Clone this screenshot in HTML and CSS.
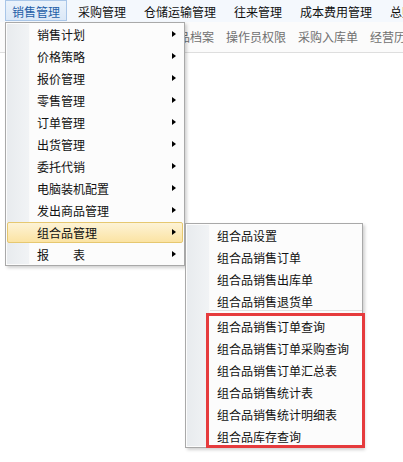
FILE: index.html
```html
<!DOCTYPE html>
<html lang="zh-CN">

<head>
  <meta charset="UTF-8">
  <title>销售管理菜单</title>
  <link rel="stylesheet" href="styles.css">
</head>

<body>
  <div class="app">
    <div class="menubar">
      <span class="bar-item active">销售管理</span>
      <span class="bar-item">采购管理</span>
      <span class="bar-item">仓储运输管理</span>
      <span class="bar-item">往来管理</span>
      <span class="bar-item">成本费用管理</span>
      <span class="bar-item">总账管理</span>
    </div>
    <div class="toolbar">
      <span class="tool">销售开单</span>
      <span class="tool">销售退货单</span>
      <span class="tool">商品档案</span>
      <span class="tool">操作员权限</span>
      <span class="tool">采购入库单</span>
      <span class="tool">经营历程</span>
    </div>

    <div class="menu main-menu">
      <div class="row has-sub">销售计划</div>
      <div class="row has-sub">价格策略</div>
      <div class="row has-sub">报价管理</div>
      <div class="row has-sub">零售管理</div>
      <div class="row has-sub">订单管理</div>
      <div class="row has-sub">出货管理</div>
      <div class="row has-sub">委托代销</div>
      <div class="row has-sub">电脑装机配置</div>
      <div class="row has-sub">发出商品管理</div>
      <div class="row has-sub selected">组合品管理</div>
      <div class="row has-sub">报　　表</div>
    </div>

    <div class="menu sub-menu">
      <div class="row">组合品设置</div>
      <div class="row">组合品销售订单</div>
      <div class="row">组合品销售出库单</div>
      <div class="row">组合品销售退货单</div>
      <div class="separator"></div>
      <div class="marked">
        <div class="row">组合品销售订单查询</div>
        <div class="row">组合品销售订单采购查询</div>
        <div class="row">组合品销售订单汇总表</div>
        <div class="row">组合品销售统计表</div>
        <div class="row">组合品销售统计明细表</div>
        <div class="row">组合品库存查询</div>
      </div>
    </div>
  </div>
</body>

</html>
```

FILE: styles.css
```css
* {
  box-sizing: border-box;
  margin: 0;
  padding: 0;
}

body {
  font-family: "Noto Sans CJK SC", "Noto Sans", sans-serif;
  font-size: 12px;
  color: #111;
  background: #fff;
}

.app {
  position: relative;
  width: 403px;
  height: 462px;
  overflow: hidden;
}

/* top menu bar */
.menubar {
  display: flex;
  height: 22px;
  padding-left: 3px;
  background: #f4f8fd;
  white-space: nowrap;
}

.bar-item {
  margin: 0 2px;
  padding: 0 6px;
  height: 21px;
  line-height: 22px;
  border: 1px solid transparent;
}

.bar-item.active {
  color: #1f5fa8;
  background: linear-gradient(#eaf2fb, #dbe8f7);
  border-color: #a9c6e8;
}

/* shortcut bar */
.toolbar {
  display: flex;
  gap: 12px;
  height: 31px;
  padding-left: 34px;
  line-height: 30px;
  color: #707070;
  background: #fbfbfb;
  border-bottom: 1px solid #dedede;
  white-space: nowrap;
}

/* dropdown menus */
.menu {
  position: absolute;
  background: #fcfcfc;
  border: 1px solid #a9a9a9;
  box-shadow: 2px 2px 3px rgba(0, 0, 0, 0.18);
}

.menu::before {
  content: "";
  position: absolute;
  top: 1px;
  bottom: 1px;
  left: 1px;
  width: 22px;
  background: linear-gradient(to right, #e8ebee, #f1f3f5);
  border-right: 1px solid #fafafa;
}

.main-menu {
  left: 5px;
  top: 22px;
  width: 180px;
  z-index: 2;
}

.sub-menu {
  left: 185px;
  top: 223px;
  width: 178px;
  z-index: 3;
}

.row {
  position: relative;
  height: 22px;
  line-height: 24px;
  padding-left: 31px;
  white-space: nowrap;
}

.row.has-sub::after {
  content: "";
  position: absolute;
  right: 8px;
  top: 8px;
  border-left: 4px solid #000;
  border-top: 3.5px solid transparent;
  border-bottom: 3.5px solid transparent;
}

.row.selected {
  z-index: 1;
}

.row.selected::before {
  content: "";
  position: absolute;
  z-index: -1;
  left: 1px;
  right: 1px;
  top: 1px;
  height: 19px;
  background: linear-gradient(#fdf3d6, #fbe3a3);
  border: 1px solid #e6c870;
  border-radius: 2px;
}

.separator {
  height: 3px;
  margin-left: 24px;
  border-top: 1px solid #e0e0e0;
  position: relative;
  top: -2px;
}

.marked {
  position: relative;
}

.marked::after {
  content: "";
  position: absolute;
  left: 20px;
  width: 153px;
  top: -2px;
  bottom: -1px;
  border: 3px solid #e63b3d;
}
```
